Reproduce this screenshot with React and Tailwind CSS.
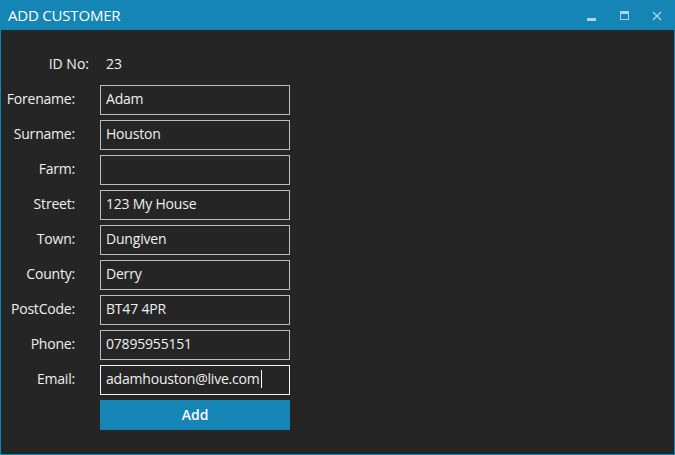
import React from "react";

const fields = [
  { label: "Forename:", value: "Adam" },
  { label: "Surname:", value: "Houston" },
  { label: "Farm:", value: "" },
  { label: "Street:", value: "123 My House" },
  { label: "Town:", value: "Dungiven" },
  { label: "County:", value: "Derry" },
  { label: "PostCode:", value: "BT47 4PR" },
  { label: "Phone:", value: "07895955151" },
  { label: "Email:", value: "adamhouston@live.com", focused: true },
];

export default function App() {
  return (
    <div
      className="w-[675px] h-[455px] flex flex-col bg-[#252525] border border-[#1585b5] text-[#f0f0f0]"
      style={{ fontFamily: '"Open Sans", "Noto Sans", sans-serif' }}
    >
      <div className="h-[29px] shrink-0 bg-[#1585b5] flex items-center pl-[7px]">
        <span className="text-[15px] text-white tracking-[-0.2px]">ADD CUSTOMER</span>
        <div className="ml-auto flex items-center h-full">
          <div className="w-[33px] h-full flex items-center justify-center">
            <div className="w-[9px] h-[3px] bg-[#a9d4ea] mt-[7px]" />
          </div>
          <div className="w-[33px] h-full flex items-center justify-center">
            <div className="w-[9px] h-[9px] border border-[#a9d4ea] border-t-[3px]" />
          </div>
          <div className="w-[33px] h-full flex items-center justify-center pr-[2px]">
            <svg width="10" height="10" viewBox="0 0 10 10">
              <path d="M1 1L9 9M9 1L1 9" stroke="#a9d4ea" strokeWidth="1.4" />
            </svg>
          </div>
        </div>
      </div>

      <div className="flex flex-col pt-[20px]">
        <div className="flex items-center h-[30px] mb-[5px] pb-[3px]">
          <div className="w-[88px] text-right text-[14px] font-medium">ID No:</div>
          <div className="pl-[17px] text-[14px]">23</div>
        </div>
        {fields.map((f, i) => (
          <div key={i} className="flex items-center h-[30px] mb-[5px]">
            <div className="w-[74px] text-right text-[14px] tracking-[-0.2px] font-medium pb-[3px]">
              {f.label}
            </div>
            <div
              className={
                "ml-[25px] w-[190px] h-[30px] flex items-center px-[5px] pb-[3px] text-[14px] tracking-[-0.2px] border " +
                (f.focused ? "border-[#f2f2f2]" : "border-[#bdbdbd]")
              }
            >
              {f.value}
              {f.focused && <span className="w-px h-[18px] bg-white ml-[1px]" />}
            </div>
          </div>
        ))}
        <div className="flex">
          <button className="ml-[99px] w-[190px] h-[30px] pb-[2px] bg-[#1585b5] text-[14px] text-white font-semibold">
            Add
          </button>
        </div>
      </div>
    </div>
  );
}
